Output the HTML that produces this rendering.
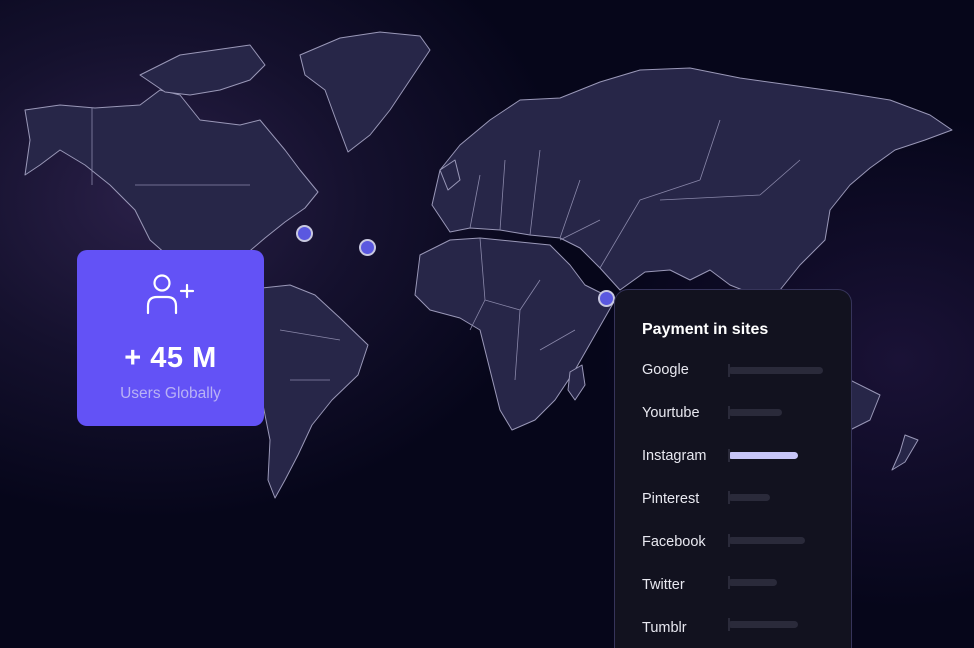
<!DOCTYPE html>
<html><head><meta charset="utf-8"><style>
html,body{margin:0;padding:0;width:974px;height:648px;overflow:hidden;background:#06061a;font-family:"Liberation Sans",sans-serif;position:relative}
.bg{position:absolute;inset:0;background:radial-gradient(ellipse 420px 320px at 150px 200px,#2a2048 0%,#15112e 50%,rgba(6,6,26,0) 100%),radial-gradient(ellipse 300px 250px at 900px 360px,#1a1236 0%,rgba(6,6,26,0) 100%),#06061a}
svg.map{position:absolute;left:0;top:0}
.card{position:absolute;left:77px;top:250px;width:187px;height:176px;background:#6352f6;border-radius:10px;text-align:center;color:#fff}
.card .num{position:absolute;top:92px;width:100%;font-size:29px;font-weight:bold;letter-spacing:0.5px}
.card .lbl{position:absolute;top:135px;width:100%;font-size:15.5px;color:#b9b2f5}
.panel{position:absolute;left:614px;top:289px;width:236px;height:370px;background:#12121f;border:1px solid #36345a;border-bottom:none;border-radius:14px 14px 0 0;color:#fff}
.panel h3{position:absolute;left:27px;top:31px;margin:0;font-size:16px;font-weight:bold}
.row{position:absolute;left:27px;font-size:14.5px;color:#e8e8f0}
.bar{position:absolute;left:113px;height:7px;border-radius:4px;background:#2a2a3a}
.bar:before{content:"";position:absolute;left:0;top:-3px;width:2px;height:13px;background:#2a2a3a}
.dot{position:absolute;width:13px;height:13px;border-radius:50%;background:#5a58e0;border:2.5px solid #c8c8e0}
.wrap{position:absolute;left:0;top:0;width:974px;height:648px;overflow:hidden}
</style></head><body>
<div class="wrap">
<div class="bg"></div>
<svg class="map" width="974" height="648" viewBox="0 0 974 648" fill="#272648" stroke="#9a98b8" stroke-width="1" stroke-linejoin="round">
<path d="M25,110 L60,105 L95,108 L140,105 L160,90 L180,95 L200,120 L240,125 L260,120 L285,150 L300,170 L318,192 L305,208 L285,222 L265,238 L245,255 L228,268 L205,272 L175,262 L150,240 L135,210 L110,185 L85,165 L60,150 L40,165 L25,175 L30,140 Z"/>
<path d="M140,75 L180,55 L215,50 L250,45 L265,65 L250,80 L220,90 L190,95 L165,92 Z"/>
<path d="M300,55 L340,38 L380,32 L420,36 L430,50 L410,80 L390,110 L370,135 L348,152 L336,120 L325,90 L305,75 Z"/>
<path d="M262,288 L290,285 L315,295 L340,318 L368,345 L358,375 L332,400 L312,425 L298,455 L285,480 L275,498 L268,480 L270,440 L262,400 L255,355 L250,320 Z"/>
<path d="M432,205 L440,170 L460,145 L490,120 L520,100 L560,98 L600,82 L640,70 L690,68 L740,78 L790,85 L840,92 L890,100 L930,115 L952,130 L925,140 L895,150 L870,168 L850,185 L830,210 L825,240 L800,265 L780,290 L755,295 L730,285 L710,270 L690,280 L670,270 L645,272 L620,290 L600,268 L580,248 L560,238 L530,235 L500,230 L470,228 L450,232 Z"/>
<path d="M420,255 L450,240 L480,238 L520,242 L550,245 L570,265 L585,285 L605,295 L615,300 L595,335 L575,370 L555,400 L535,420 L512,430 L500,410 L490,370 L480,330 L460,318 L430,310 L415,295 Z"/>
<path d="M570,372 L582,365 L585,385 L575,400 L568,390 Z"/>
<path d="M850,380 L880,395 L870,420 L850,430 Z"/>
<path d="M905,435 L918,440 L905,462 L892,470 L900,452 Z"/>
<path d="M440,170 L455,160 L460,180 L448,190 Z"/>
<g fill="none" stroke="#8a88aa" stroke-width="0.8">
<path d="M92,108 L92,185 M135,185 L250,185 M470,228 L480,175 M500,230 L505,160 M530,235 L540,150 M560,238 L580,180 M600,268 L640,200 L700,180 M660,200 L760,195 M700,180 L720,120 M760,195 L800,160 M480,238 L485,300 L520,310 L540,280 M485,300 L470,330 M520,310 L515,380 M540,350 L575,330 M280,330 L340,340 M290,380 L330,380 M560,240 L600,220"/>
</g>
</svg>
<div class="dot" style="left:296px;top:225px"></div>
<div class="dot" style="left:359px;top:239px"></div>
<div class="dot" style="left:598px;top:290px"></div>
<div class="card">
<svg style="position:absolute;left:68px;top:22px" width="52" height="44" viewBox="0 0 52 44" fill="none" stroke="#fff" stroke-width="2.2" stroke-linecap="round">
<circle cx="17" cy="11" r="7.5"/>
<path d="M3,41 L3,34 Q3,25 12,25 L22,25 Q31,25 31,34 L31,41"/>
<path d="M36,19 L48,19 M42,13 L42,25"/>
</svg>
<div class="num">+ 45 M</div>
<div class="lbl">Users Globally</div>
</div>
<div class="panel">
<h3>Payment in sites</h3>
<div class="row" style="top:72px">Google</div><div class="bar" style="top:77px;width:95px"></div>
<div class="row" style="top:115px">Yourtube</div><div class="bar" style="top:119px;width:54px"></div>
<div class="row" style="top:158px">Instagram</div><div class="bar" style="top:162px;width:70px;background:#c8c6f8"></div>
<div class="row" style="top:201px">Pinterest</div><div class="bar" style="top:204px;width:42px"></div>
<div class="row" style="top:244px">Facebook</div><div class="bar" style="top:247px;width:77px"></div>
<div class="row" style="top:287px">Twitter</div><div class="bar" style="top:289px;width:49px"></div>
<div class="row" style="top:330px">Tumblr</div><div class="bar" style="top:331px;width:70px"></div>
</div>
</div>
</body></html>
